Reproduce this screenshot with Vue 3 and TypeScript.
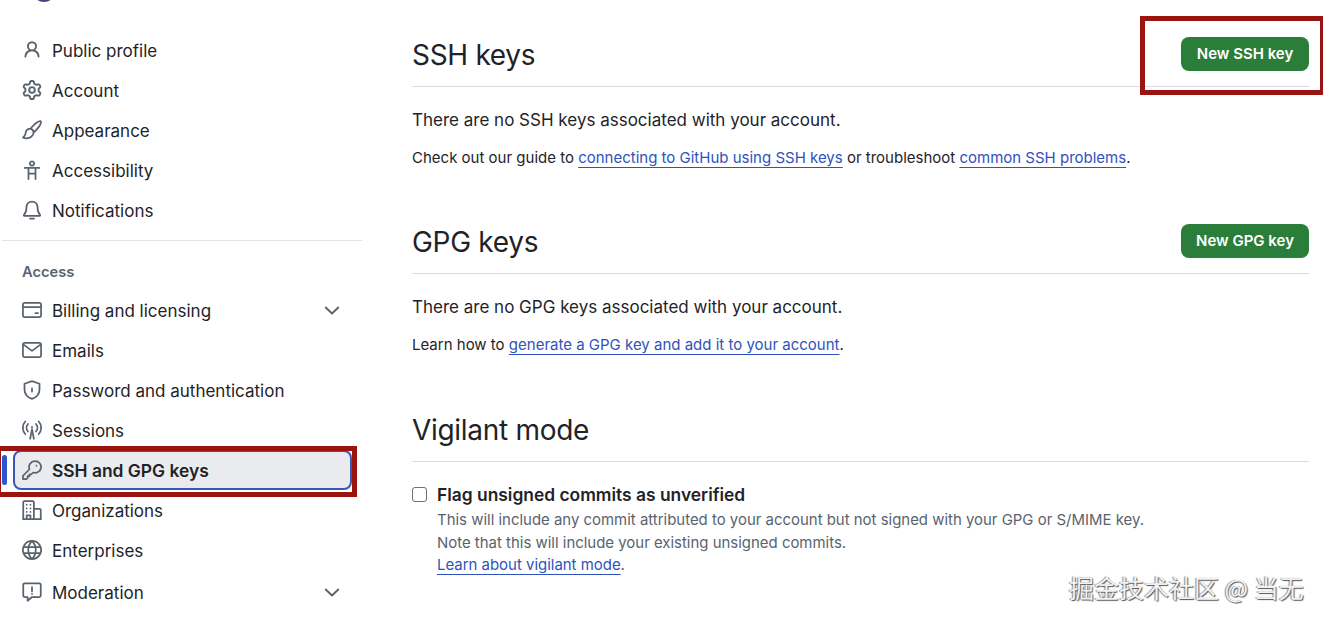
<script setup lang="ts">
interface Icon {
  d: string
  filled?: boolean
}

interface NavItem {
  label: string
  icon: Icon
  expand?: boolean
  active?: boolean
  last?: boolean
}

const icons: Record<string, Icon> = {
  person: {
    filled: true,
    d: 'M10.561 8.073a6.005 6.005 0 0 1 3.432 5.142.75.75 0 1 1-1.498.07 4.5 4.5 0 0 0-8.99 0 .75.75 0 1 1-1.498-.07 6.004 6.004 0 0 1 3.431-5.142 3.999 3.999 0 1 1 5.123 0ZM10.5 5a2.5 2.5 0 1 0-5 0 2.5 2.5 0 0 0 5 0Z',
  },
  gear: {
    filled: true,
    d: 'M8 0a8.2 8.2 0 0 1 .701.031C9.444.095 9.99.645 10.16 1.29l.288 1.107c.018.066.079.158.212.224.231.114.454.243.668.386.123.082.233.09.299.071l1.103-.303c.644-.176 1.392.021 1.82.63.27.385.506.792.704 1.218.315.675.111 1.422-.364 1.891l-.814.806c-.049.048-.098.147-.088.294.016.257.016.515 0 .772-.01.147.038.246.088.294l.814.806c.475.469.679 1.216.364 1.891a7.977 7.977 0 0 1-.704 1.217c-.428.61-1.176.807-1.82.63l-1.102-.302c-.067-.019-.177-.011-.3.071a5.909 5.909 0 0 1-.668.386c-.133.066-.194.158-.211.224l-.29 1.106c-.168.646-.715 1.196-1.458 1.26a8.006 8.006 0 0 1-1.402 0c-.743-.064-1.289-.614-1.458-1.26l-.289-1.106c-.018-.066-.079-.158-.212-.224a5.738 5.738 0 0 1-.668-.386c-.123-.082-.233-.09-.299-.071l-1.103.303c-.644.176-1.392-.021-1.82-.63a8.12 8.12 0 0 1-.704-1.218c-.315-.675-.111-1.422.363-1.891l.815-.806c.05-.048.098-.147.088-.294a6.214 6.214 0 0 1 0-.772c.01-.147-.038-.246-.088-.294l-.815-.806C.635 6.045.431 5.298.746 4.623a7.92 7.92 0 0 1 .704-1.217c.428-.61 1.176-.807 1.82-.63l1.102.302c.067.019.177.011.3-.071.214-.143.437-.272.668-.386.133-.066.194-.158.211-.224l.29-1.106C6.009.645 6.556.095 7.299.03 7.53.01 7.764 0 8 0Zm-.571 1.525c-.036.003-.108.036-.137.146l-.289 1.105c-.147.561-.549.967-.998 1.189-.173.086-.34.183-.5.29-.417.278-.97.423-1.529.27l-1.103-.303c-.109-.03-.175.016-.195.045-.22.312-.412.644-.573.99-.014.031-.021.11.059.19l.815.806c.411.406.562.957.53 1.456a4.709 4.709 0 0 0 0 .582c.032.499-.119 1.05-.53 1.456l-.815.806c-.081.08-.073.159-.059.19.162.346.353.677.573.989.02.03.085.076.195.046l1.102-.303c.56-.153 1.113-.008 1.53.27.161.107.328.204.501.29.447.222.85.629.997 1.189l.289 1.105c.029.109.101.143.137.146a6.6 6.6 0 0 0 1.142 0c.036-.003.108-.036.137-.146l.289-1.105c.147-.561.549-.967.998-1.189.173-.086.34-.183.5-.29.417-.278.97-.423 1.529-.27l1.103.303c.109.029.175-.016.195-.045.22-.313.411-.644.573-.99.014-.031.021-.11-.059-.19l-.815-.806c-.411-.406-.562-.957-.53-1.456a4.709 4.709 0 0 0 0-.582c-.032-.499.119-1.05.53-1.456l.815-.806c.081-.08.073-.159.059-.19a6.464 6.464 0 0 0-.573-.989c-.02-.03-.085-.076-.195-.046l-1.102.303c-.56.153-1.113.008-1.53-.27a4.44 4.44 0 0 0-.501-.29c-.447-.222-.85-.629-.997-1.189l-.289-1.105c-.029-.11-.101-.143-.137-.146a6.6 6.6 0 0 0-1.142 0ZM11 8a3 3 0 1 1-6 0 3 3 0 0 1 6 0ZM9.5 8a1.5 1.5 0 1 0-3.001.001A1.5 1.5 0 0 0 9.5 8Z',
  },
  brush: { d: 'M15 1c-1.5-.6-5 2.3-8 5.6l3 2.9C13 6.4 15.8 2.6 15 1Z M6.6 7.2C4.6 7 3.3 8.3 3 10.2c-.2 1.5-1 2.8-2.2 3.9 2.2.7 5 .6 6.6-.7 1.5-1.2 2-3 1.6-4' },
  access: { d: 'M8 1a1.75 1.75 0 1 0 .01 0Z M2.2 6.3h11.6 M5.2 6.3v8.9 M10.8 6.3v8.9 M5.2 10.8h5.6' },
  bell: { d: 'M8 1.2C5.4 1.2 3.6 3.2 3.6 5.8c0 3.2-1 5-2.1 6.2-.2.3 0 .7.3.7h12.4c.3 0 .5-.4.3-.7-1.1-1.2-2.1-3-2.1-6.2 0-2.6-1.8-4.6-4.4-4.6Z M6.5 14.9h3' },
  card: { d: 'M2.25 2.25h11.5c.83 0 1.5.67 1.5 1.5v8.5c0 .83-.67 1.5-1.5 1.5H2.25c-.83 0-1.5-.67-1.5-1.5v-8.5c0-.83.67-1.5 1.5-1.5Z M.75 5.75h14.5 M10.75 10.5h2' },
  mail: { d: 'M2.25 2.25h11.5c.83 0 1.5.67 1.5 1.5v8.5c0 .83-.67 1.5-1.5 1.5H2.25c-.83 0-1.5-.67-1.5-1.5v-8.5c0-.83.67-1.5 1.5-1.5Z M1 3.5l7 5.2 7-5.2' },
  shield: { d: 'M8 .9 14 3v4.5c0 3.6-2.4 6.2-6 7.6-3.6-1.4-6-4-6-7.6V3Z M8 6.6v2.6' },
  radio: { d: 'M4.8 3.2a4.5 4.5 0 0 0 0 6 M11.2 3.2a4.5 4.5 0 0 1 0 6 M2.6 1.2a7.5 7.5 0 0 0 0 10 M13.4 1.2a7.5 7.5 0 0 1 0 10 M8 5.5v.5 M6.5 15 8 7.5 9.5 15' },
  key: { d: 'M10.5.9a4.7 4.7 0 1 1-1.6 9.1L7.5 11.4H6v1.5H4.5v1.5L3.4 15.2H.8v-2.6L6 7.4A4.7 4.7 0 0 1 10.5.9Z M11.5 4.5h.01' },
  org: { d: 'M1 15V1.8c0-.6.4-1 1-1h6.5c.6 0 1 .4 1 1V15 M.75 15.25h14.5 M9.5 7h4.5c.6 0 1 .4 1 1v7 M3.75 3.75h.01 M6.75 3.75h.01 M3.75 6.75h.01 M6.75 6.75h.01 M3.75 9.5h.01 M6.75 9.5h.01 M3.75 15v-2.75h3V15' },
  globe: { d: 'M8 .75a7.25 7.25 0 1 0 .01 0Z M8 .75c-4 4.2-4 10.3 0 14.5 M8 .75c4 4.2 4 10.3 0 14.5 M1.3 5.6h13.4 M1.3 10.4h13.4' },
  report: { d: 'M1 2.25C1 1.56 1.56 1 2.25 1h11.5c.69 0 1.25.56 1.25 1.25v8.5c0 .69-.56 1.25-1.25 1.25H8l-3.5 3v-3H2.25C1.56 12 1 11.44 1 10.75Z M8 4v3.5 M8 9.5h.01' },
}

const topItems: NavItem[] = [
  { label: 'Public profile', icon: icons.person },
  { label: 'Account', icon: icons.gear },
  { label: 'Appearance', icon: icons.brush },
  { label: 'Accessibility', icon: icons.access },
  { label: 'Notifications', icon: icons.bell },
]

const accessItems: NavItem[] = [
  { label: 'Billing and licensing', icon: icons.card, expand: true },
  { label: 'Emails', icon: icons.mail },
  { label: 'Password and authentication', icon: icons.shield },
  { label: 'Sessions', icon: icons.radio },
  { label: 'SSH and GPG keys', icon: icons.key, active: true },
  { label: 'Organizations', icon: icons.org },
  { label: 'Enterprises', icon: icons.globe },
  { label: 'Moderation', icon: icons.report, expand: true, last: true },
]
</script>

<template>
  <div class="page">
    <aside class="sidebar">
      <div class="avatar-clip"><div class="avatar" /></div>
      <nav class="nav">
        <a v-for="item in topItems" :key="item.label" class="nav-row">
          <svg class="icon" viewBox="0 0 16 16" :class="{ filled: item.icon.filled }"><path :d="item.icon.d" /></svg>
          <span class="nav-label">{{ item.label }}</span>
        </a>
      </nav>
      <hr class="side-rule" />
      <div class="side-heading">Access</div>
      <nav class="nav">
        <a
          v-for="item in accessItems"
          :key="item.label"
          class="nav-row"
          :class="{ active: item.active, last: item.last }"
        >
          <svg class="icon" viewBox="0 0 16 16" :class="{ filled: item.icon.filled }"><path :d="item.icon.d" /></svg>
          <span class="nav-label">{{ item.label }}</span>
          <svg v-if="item.expand" class="chevron" viewBox="0 0 16 16"><path d="M3 6l5 4.8L13 6" /></svg>
        </a>
      </nav>
    </aside>

    <main class="content">
      <section class="block block-ssh">
        <header class="block-head">
          <h2>SSH keys</h2>
          <button class="btn">New SSH key</button>
        </header>
        <p class="lead">There are no SSH keys associated with your account.</p>
        <p class="note">
          Check out our guide to <a>connecting to GitHub using SSH keys</a> or troubleshoot
          <a>common SSH problems</a>.
        </p>
      </section>

      <section class="block block-gpg">
        <header class="block-head">
          <h2>GPG keys</h2>
          <button class="btn">New GPG key</button>
        </header>
        <p class="lead">There are no GPG keys associated with your account.</p>
        <p class="note">Learn how to <a>generate a GPG key and add it to your account</a>.</p>
      </section>

      <section class="block block-vigilant">
        <header class="block-head">
          <h2>Vigilant mode</h2>
        </header>
        <label class="check">
          <span class="box" />
          <span class="check-body">
            <strong>Flag unsigned commits as unverified</strong>
            <span class="hint">This will include any commit attributed to your account but not signed with your GPG or S/MIME key.</span>
            <span class="hint">Note that this will include your existing unsigned commits.</span>
            <span class="hint"><a>Learn about vigilant mode</a>.</span>
          </span>
        </label>
      </section>
    </main>

    <div class="mark mark-nav" />
    <div class="mark mark-btn" />
    <div class="watermark">掘金技术社区 @ 当无</div>
  </div>
</template>

<style>
html,
body {
  margin: 0;
  background: #fff;
}
</style>

<style scoped>
.page {
  position: relative;
  display: flex;
  width: 1323px;
  height: 621px;
  overflow: hidden;
  background: #fff;
  color: #1f2328;
  font-family: "Inter", "Liberation Sans", sans-serif;
}

.sidebar {
  width: 360px;
  margin-left: 2px;
  flex-shrink: 0;
}

.avatar-clip {
  height: 2px;
  margin-bottom: 28px;
  overflow: hidden;
}

.avatar {
  width: 24px;
  height: 24px;
  margin: -22px 0 0 30px;
  border-radius: 50%;
  background: #4a3f7a;
}

.nav {
  display: flex;
  flex-direction: column;
}

.nav-row {
  position: relative;
  display: flex;
  align-items: center;
  gap: 10px;
  height: 40px;
  box-sizing: border-box;
  width: 339px;
  margin-left: 11px;
  padding: 0 10px 0 9px;
  border-radius: 8px;
  color: #1f2328;
  font-size: 17px;
}

.nav-label {
  padding-top: 2px;
}

.nav-row.last {
  margin-top: 2px;
}

.nav-row.active {
  background: #e9ebee;
  border: 2px solid #3a57b8;
  padding: 0 8px 0 7px;
  font-size: 17.4px;
  font-weight: 600;
}

.nav-row.active .nav-label {
  padding-top: 0;
}

.nav-row.active::before {
  content: "";
  position: absolute;
  left: -13px;
  top: 3px;
  width: 5px;
  height: 30px;
  border-radius: 3px;
  background: #2f55cc;
}

.icon {
  width: 20px;
  height: 20px;
  flex-shrink: 0;
  fill: none;
  stroke: #59636e;
  stroke-width: 1.4;
  stroke-linecap: round;
  stroke-linejoin: round;
}

.icon.filled {
  fill: #59636e;
  stroke: none;
}

.chevron {
  width: 20px;
  height: 20px;
  margin-left: auto;
  fill: none;
  stroke: #59636e;
  stroke-width: 1.5;
  stroke-linecap: round;
  stroke-linejoin: round;
}

.side-rule {
  height: 1px;
  margin: 10px 0 0;
  border: 0;
  background: #dfe2e6;
}

.side-heading {
  height: 49px;
  box-sizing: border-box;
  padding: 22px 0 0 20px;
  font-size: 14.7px;
  line-height: 18px;
  font-weight: 600;
  color: #59636e;
}

.content {
  width: 897px;
  margin-left: 50px;
  flex-shrink: 0;
}

.block-ssh {
  padding-top: 32px;
}

.block-gpg {
  padding-top: 51px;
}

.block-vigilant {
  padding-top: 52px;
}

.block-head {
  display: flex;
  align-items: center;
  justify-content: space-between;
  height: 46px;
  padding-bottom: 8px;
  box-sizing: content-box;
  border-bottom: 1px solid #d9dce0;
}

.block-head h2 {
  margin: 0;
  font-size: 28px;
  line-height: 46px;
  font-weight: 400;
  letter-spacing: -0.3px;
}

.btn {
  width: 128px;
  height: 34px;
  margin-bottom: 2px;
  padding: 0 0 2px;
  border: 0;
  border-radius: 8px;
  background: #2b7d3a;
  color: #fff;
  font-family: inherit;
  font-size: 15px;
  font-weight: 600;
}

.lead {
  margin: 21px 0 0;
  font-size: 17px;
  line-height: 24px;
}

.note {
  margin: 16px 0 0;
  font-size: 15px;
  line-height: 20px;
}

a {
  color: #2f52bd;
}

.note a,
.hint a {
  text-decoration: underline;
  text-underline-offset: 4px;
  text-decoration-thickness: 1px;
}

.check {
  display: flex;
  gap: 10px;
  margin-top: 21px;
}

.box {
  width: 15px;
  height: 15px;
  box-sizing: border-box;
  margin-top: 4px;
  border: 1px solid #6a7078;
  border-radius: 3px;
  flex-shrink: 0;
}

.check-body {
  display: flex;
  flex-direction: column;
}

.check-body strong {
  font-size: 17.4px;
  line-height: 24px;
  font-weight: 600;
  margin-bottom: 2px;
}

.hint {
  font-size: 14.95px;
  line-height: 22.5px;
  color: #59636e;
}

.mark {
  position: absolute;
  box-sizing: border-box;
  border: 5px solid #9c1412;
}

.mark-nav {
  left: -4px;
  top: 446px;
  width: 361px;
  height: 51px;
}

.mark-btn {
  left: 1140px;
  top: 16px;
  width: 185px;
  height: 79px;
}

.watermark {
  position: absolute;
  left: 1069px;
  top: 572px;
  font-family: "Noto Sans CJK SC", sans-serif;
  font-size: 25px;
  line-height: 30px;
  white-space: nowrap;
  color: #f2f2f2;
  text-shadow: 1px 1px 1px #555, -1px 0 1px #888;
}
</style>
